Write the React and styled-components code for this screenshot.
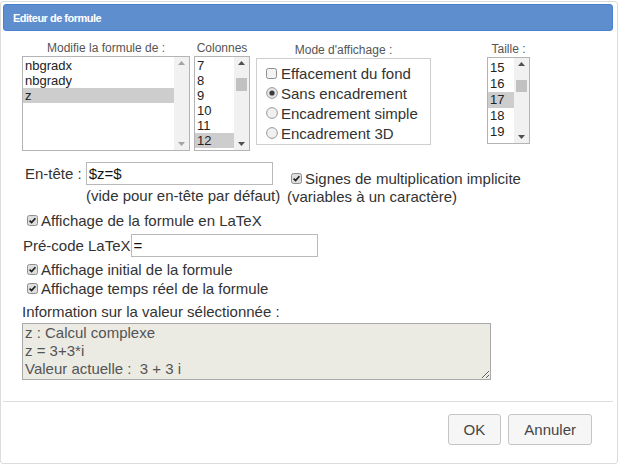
import React from 'react';
import styled, { createGlobalStyle } from 'styled-components';

const Global = createGlobalStyle`
  html, body { margin: 0; padding: 0; background: #fff; }
  body { font-family: "Liberation Sans", Arial, sans-serif; color: #333; }
  * { box-sizing: border-box; }
`;

const Dialog = styled.div`
  margin-top: 1px;
  width: 618px;
  height: 463px;
  border: 1px solid #dcdcdc;
  border-radius: 3px;
  padding: 2px 4px 2px 2px;
  display: flex;
  flex-direction: column;
  background: #fff;
`;

const TitleBar = styled.div`
  height: 27px;
  flex: none;
  display: flex;
  align-items: center;
  padding-left: 9px;
  background: #5f8ecf;
  border: 1px solid #4a80d0;
  border-radius: 3px;
  color: #fff;
  font-weight: bold;
  font-size: 11px;
  letter-spacing: -0.5px;
`;

const Content = styled.div`
  flex: 1;
  padding: 10px 0 0 19px;
  display: flex;
  flex-direction: column;
  align-items: flex-start;
`;

const TopRow = styled.div`
  display: flex;
  align-items: flex-start;
`;

const Col = styled.div`
  display: flex;
  flex-direction: column;
  width: ${p => p.$w}px;
  margin-left: ${p => p.$ml || 0}px;
  margin-top: ${p => p.$mt || 0}px;
`;

const ColLabel = styled.div`
  font-size: 12px;
  line-height: 15px;
  height: 15px;
  color: #555;
  text-align: center;
  white-space: nowrap;
`;

const ListBox = styled.div`
  height: ${p => p.$h}px;
  border: 1px solid #b4b4b4;
  display: flex;
  background: #fff;
`;

const Items = styled.div`
  flex: 1;
  padding-top: ${p => p.$pt}px;
  overflow: hidden;
`;

const Item = styled.div`
  font-size: 13px;
  line-height: ${p => p.$lh}px;
  height: ${p => p.$lh}px;
  padding-left: 2px;
  color: #222;
  white-space: nowrap;
  background: ${p => (p.$sel ? '#cdcdcd' : 'transparent')};
`;

const Track = styled.div`
  width: 15px;
  background: #f1f1f1;
  position: relative;
  display: flex;
  flex-direction: column;
  justify-content: space-between;
  align-items: center;
  padding: 4px 0;
`;

const Thumb = styled.div`
  position: absolute;
  left: 2px;
  right: 2px;
  background: #c1c1c1;
`;

const Arrow = ({ down, color }) => (
  <svg width="7" height="4" viewBox="0 0 7 4">
    <path d={down ? 'M0 0 L7 0 L3.5 4 Z' : 'M0 4 L7 4 L3.5 0 Z'} fill={color} />
  </svg>
);

const Scrollbar = ({ active, thumbTop, thumbHeight }) => {
  const c = active ? '#505050' : '#a3a3a3';
  return (
    <Track>
      <Arrow color={c} />
      {active && <Thumb style={{ top: thumbTop, height: thumbHeight }} />}
      <Arrow down color={c} />
    </Track>
  );
};

const ModeBox = styled.div`
  height: 87px;
  border: 1px solid #cfcfcf;
  padding: 4px 0 0 9px;
`;

const OptRow = styled.div`
  display: flex;
  align-items: center;
  gap: ${p => p.$gap ?? 4}px;
  height: ${p => p.$h || 20}px;
  font-size: 15px;
  color: #333;
  white-space: nowrap;
  margin-top: ${p => p.$mt || 0}px;
  padding-left: ${p => p.$pl || 0}px;
`;

const BoxIcon = styled.svg`
  flex: none;
  display: block;
`;

const Check = ({ checked }) => (
  <BoxIcon width="11" height="11" viewBox="0 0 11 11">
    <rect x="0.5" y="0.5" width="10" height="10" rx="2" fill={checked ? '#dedede' : '#f3f3f3'} stroke="#8e8e8e" />
    {checked && <path d="M2.6 5.6 L4.6 7.6 L8.4 3.2" fill="none" stroke="#1e1e1e" strokeWidth="1.7" />}
  </BoxIcon>
);

const Radio = ({ checked }) => (
  <BoxIcon width="12" height="12" viewBox="0 0 12 12">
    <circle cx="6" cy="6" r="5.4" fill={checked ? '#e4e4e4' : '#f0f0f0'} stroke="#9a9a9a" />
    {checked && <circle cx="6" cy="6" r="2.6" fill="#3a3a3a" />}
  </BoxIcon>
);

const HeaderRow = styled.div`
  display: flex;
  margin-top: 11px;
`;

const LeftBlock = styled.div`
  width: 265px;
  padding-left: 3px;
`;

const RightBlock = styled.div`
  display: flex;
  flex-direction: column;
`;

const FieldLine = styled.div`
  display: flex;
  align-items: center;
  gap: ${p => p.$gap ?? 4}px;
  font-size: 15px;
  color: #333;
  white-space: nowrap;
  margin-top: ${p => p.$mt || 0}px;
  padding-left: ${p => p.$pl || 0}px;
`;

const TextInput = styled.input`
  width: 187px;
  height: 23px;
  border: 1px solid #b9b9b9;
  padding: 0 2px;
  font-family: "Liberation Sans", Arial, sans-serif;
  font-size: 15px;
  color: #111;
  outline: none;
  background: #fff;
`;

const Hint = styled.div`
  font-size: 15px;
  line-height: 18px;
  color: #333;
  white-space: nowrap;
  margin-top: ${p => p.$mt || 0}px;
  padding-left: ${p => p.$pl || 0}px;
`;

const InfoLabel = styled.div`
  font-size: 15px;
  line-height: 18px;
  color: #333;
  margin-top: 6px;
`;

const InfoArea = styled.textarea`
  margin-top: 2px;
  width: 469px;
  height: 57px;
  border: 1px solid #a9a9a9;
  background: #ebebe4;
  color: #545454;
  font-family: "Liberation Sans", Arial, sans-serif;
  font-size: 15px;
  line-height: 18px;
  padding: 0 2px;
  overflow: hidden;
  resize: both;
  outline: none;
`;

const ButtonPane = styled.div`
  flex: none;
  height: 60px;
  border-top: 1px solid #dddddd;
  padding: 12px 21px 0 0;
  display: flex;
  justify-content: flex-end;
  align-items: flex-start;
  gap: 7px;
`;

const Button = styled.button`
  height: 31px;
  padding: 0 15px;
  background: #f6f6f6;
  border: 1px solid #c5c5c5;
  border-radius: 3px;
  color: #454545;
  font-family: "Liberation Sans", Arial, sans-serif;
  font-size: 15px;
`;

export default function App() {
  return (
    <>
      <Global />
      <Dialog>
        <TitleBar>Editeur de formule</TitleBar>
        <Content>
          <TopRow>
            <Col $w={168}>
              <ColLabel>Modifie la formule de :</ColLabel>
              <ListBox $h={95}>
                <Items $pt={1}>
                  <Item $lh={15}>nbgradx</Item>
                  <Item $lh={15}>nbgrady</Item>
                  <Item $lh={15} $sel>z</Item>
                </Items>
                <Scrollbar />
              </ListBox>
            </Col>
            <Col $w={56} $ml={4}>
              <ColLabel>Colonnes</ColLabel>
              <ListBox $h={95}>
                <Items $pt={1}>
                  {['7', '8', '9', '10', '11', '12'].map(v => (
                    <Item key={v} $lh={15} $sel={v === '12'}>{v}</Item>
                  ))}
                </Items>
                <Scrollbar active thumbTop={21} thumbHeight={13} />
              </ListBox>
            </Col>
            <Col $w={175} $ml={6} $mt={2}>
              <ColLabel>Mode d'affichage :</ColLabel>
              <ModeBox>
                <OptRow><Check />Effacement du fond</OptRow>
                <OptRow $gap={3}><Radio checked />Sans encadrement</OptRow>
                <OptRow $gap={3}><Radio />Encadrement simple</OptRow>
                <OptRow $gap={3}><Radio />Encadrement 3D</OptRow>
              </ModeBox>
            </Col>
            <Col $w={43} $ml={56} $mt={1}>
              <ColLabel>Taille :</ColLabel>
              <ListBox $h={87}>
                <Items $pt={2}>
                  {['15', '16', '17', '18', '19'].map(v => (
                    <Item key={v} $lh={16} $sel={v === '17'}>{v}</Item>
                  ))}
                </Items>
                <Scrollbar active thumbTop={22} thumbHeight={12} />
              </ListBox>
            </Col>
          </TopRow>

          <HeaderRow>
            <LeftBlock>
              <FieldLine>
                En-tête :
                <TextInput readOnly value="$z=$" />
              </FieldLine>
              <Hint $mt={2} $pl={61}>(vide pour en-tête par défaut)</Hint>
            </LeftBlock>
            <RightBlock>
              <OptRow $h={18} $mt={7} $pl={4} $gap={3}><Check checked />Signes de multiplication implicite</OptRow>
              <Hint $mt={1}>(variables à un caractère)</Hint>
            </RightBlock>
          </HeaderRow>

          <OptRow $h={18} $mt={5} $pl={5} $gap={3}><Check checked />Affichage de la formule en LaTeX</OptRow>

          <FieldLine $mt={5} $pl={1} $gap={0}>
            Pré-code LaTeX
            <TextInput readOnly value="=" />
          </FieldLine>

          <OptRow $h={18} $mt={3} $pl={5} $gap={3}><Check checked />Affichage initial de la formule</OptRow>
          <OptRow $h={18} $mt={1} $pl={5} $gap={3}><Check checked />Affichage temps réel de la formule</OptRow>

          <InfoLabel>Information sur la valeur sélectionnée :</InfoLabel>
          <InfoArea readOnly value={'z : Calcul complexe\nz = 3+3*i\nValeur actuelle :  3 + 3 i'} />
        </Content>
        <ButtonPane>
          <Button>OK</Button>
          <Button>Annuler</Button>
        </ButtonPane>
      </Dialog>
    </>
  );
}
